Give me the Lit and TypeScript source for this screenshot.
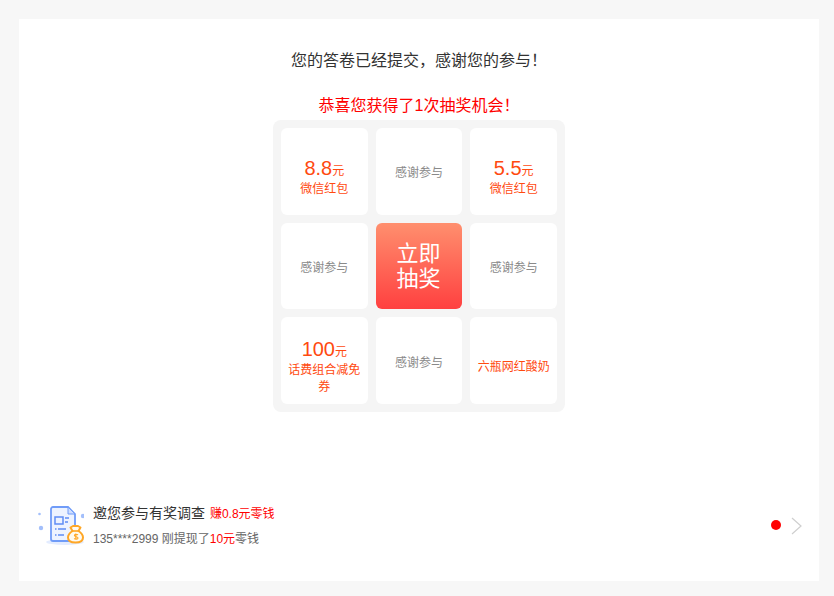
import { LitElement, html, css } from "lit";
import { customElement } from "lit/decorators.js";

type Cell =
  | { kind: "thanks" }
  | { kind: "go" }
  | { kind: "prize"; value?: string; label: string };

const cells: Cell[] = [
  { kind: "prize", value: "8.8", label: "微信红包" },
  { kind: "thanks" },
  { kind: "prize", value: "5.5", label: "微信红包" },
  { kind: "thanks" },
  { kind: "go" },
  { kind: "thanks" },
  { kind: "prize", value: "100", label: "话费组合减免券" },
  { kind: "thanks" },
  { kind: "prize", label: "六瓶网红酸奶" },
];

@customElement("app-root")
export class AppRoot extends LitElement {
  static styles = css`
    :host {
      display: block;
      height: 596px;
      box-sizing: border-box;
      padding: 19px 15px 15px 19px;
      background: #f7f7f7;
      font-family: "Liberation Sans", "Noto Sans CJK SC", sans-serif;
      overflow: hidden;
    }
    .card {
      height: 562px;
      background: #fff;
      display: flex;
      flex-direction: column;
      align-items: center;
      position: relative;
    }
    .title {
      margin-top: 31px;
      font-size: 16px;
      line-height: 22px;
      color: #333;
      text-align: center;
    }
    .sub {
      margin-top: 23px;
      font-size: 16px;
      line-height: 22px;
      color: #f00;
      text-align: center;
    }
    .grid {
      margin-top: 3px;
      width: 292px;
      height: 292px;
      box-sizing: border-box;
      padding: 8px;
      background: #f5f5f5;
      border-radius: 8px;
      display: grid;
      grid-template-columns: repeat(3, 1fr);
      grid-template-rows: repeat(3, 1fr);
      gap: 8px;
    }
    .cell {
      background: #fff;
      border-radius: 6px;
      display: flex;
      flex-direction: column;
      align-items: center;
      justify-content: center;
      text-align: center;
      min-width: 0;
      min-height: 0;
      box-sizing: border-box;
    }
    .prize {
      padding-top: 14px;
    }
    .thanks {
      padding-top: 1px;
      font-size: 12px;
      color: #8a8a8a;
    }
    .value {
      font-size: 20px;
      line-height: 20px;
      color: #ff4a10;
    }
    .value small {
      font-size: 12px;
    }
    .label {
      font-size: 12px;
      line-height: 17px;
      color: #ff4a10;
      padding: 0 6px;
    }
    .go {
      background: linear-gradient(#ff8f6e, #ff4040);
      color: #fff;
      font-size: 22px;
      line-height: 25px;
      padding-right: 1px;
    }
    .banner {
      position: absolute;
      left: 19px;
      right: 16px;
      top: 483px;
      display: flex;
      align-items: center;
    }
    .icon {
      width: 46px;
      height: 48px;
      flex: none;
      margin-right: 9px;
    }
    .info {
      flex: 1;
      margin-bottom: 1px;
    }
    .line1 {
      font-size: 14px;
      line-height: 20px;
      color: #333;
    }
    .line1 span {
      font-size: 12px;
      color: #f00;
      margin-left: 1px;
    }
    .line2 {
      margin-top: 6px;
      font-size: 12px;
      line-height: 18px;
      color: #666;
    }
    .line2 span {
      color: #f00;
    }
    .dot {
      width: 10px;
      height: 10px;
      border-radius: 50%;
      background: #f00;
      flex: none;
      margin: 0 10px 2px 0;
    }
    .chev {
      width: 12px;
      height: 18px;
      flex: none;
    }
  `;

  renderCell(c: Cell) {
    if (c.kind === "thanks") return html`<div class="cell thanks">感谢参与</div>`;
    if (c.kind === "go") return html`<div class="cell go">立即<br />抽奖</div>`;
    return html`<div class="cell prize">
      ${c.value ? html`<div class="value">${c.value}<small>元</small></div>` : ""}
      <div class="label">${c.label}</div>
    </div>`;
  }

  render() {
    return html`<div class="card">
      <div class="title">您的答卷已经提交，感谢您的参与！</div>
      <div class="sub">恭喜您获得了1次抽奖机会！</div>
      <div class="grid">${cells.map((c) => this.renderCell(c))}</div>
      <div class="banner">
        <svg class="icon" viewBox="0 0 46 48">
          <ellipse cx="27" cy="40" rx="19" ry="3" fill="#e3ecff" />
          <circle cx="1.500" cy="12" r="1.300" fill="#a3bffb" />
          <circle cx="3" cy="26" r="2.200" fill="#a3bffb" />
          <circle cx="45" cy="14" r="2.200" fill="#a3bffb" />
          <path d="M15 5h15l7 7v27H15a2 2 0 0 1-2-2V7a2 2 0 0 1 2-2z" fill="#edf3ff" stroke="#709cf8" stroke-width="1.800" />
          <path d="M30 5v7h7z" fill="#cfdeff" stroke="#709cf8" stroke-width="1" />
          <rect x="17" y="15" width="8" height="7" fill="none" stroke="#5f8df5" stroke-width="1.500" />
          <path d="M27 16h4M27 20h3M17 27h1.500M20 27h8M17 33h1.500M20 33h6" stroke="#5f8df5" stroke-width="1.300" />
          <path d="M32.500 25.500l2.500-1.500h5l2.500 1.500-2 3.500c3 2 4.500 4 4.500 6.500 0 3.500-3 5-7.500 5s-7.500-1.500-7.500-5c0-2.500 1.500-4.500 4.500-6.500z" fill="#fffaf0" stroke="#ffa726" stroke-width="2" stroke-linejoin="round" />
          <path d="M34.500 29h6" stroke="#ffa726" stroke-width="1.600" />
          <path d="M40 33c-.8-.9-3.600-.9-3.600.5 0 1.700 3.600 .9 3.600 2.500 0 1.400-2.800 1.400-3.900.5M37.800 31.500v6" fill="none" stroke="#ffa726" stroke-width="1.100" />
        </svg>
        <div class="info">
          <div class="line1">邀您参与有奖调查 <span>赚0.8元零钱</span></div>
          <div class="line2">135****2999 刚提现了<span>10元</span>零钱</div>
        </div>
        <div class="dot"></div>
        <svg class="chev" viewBox="0 0 12 18">
          <path d="M1 1l9 8-9 8" fill="none" stroke="#cfcfcf" stroke-width="1.200" />
        </svg>
      </div>
    </div>`;
  }
}
